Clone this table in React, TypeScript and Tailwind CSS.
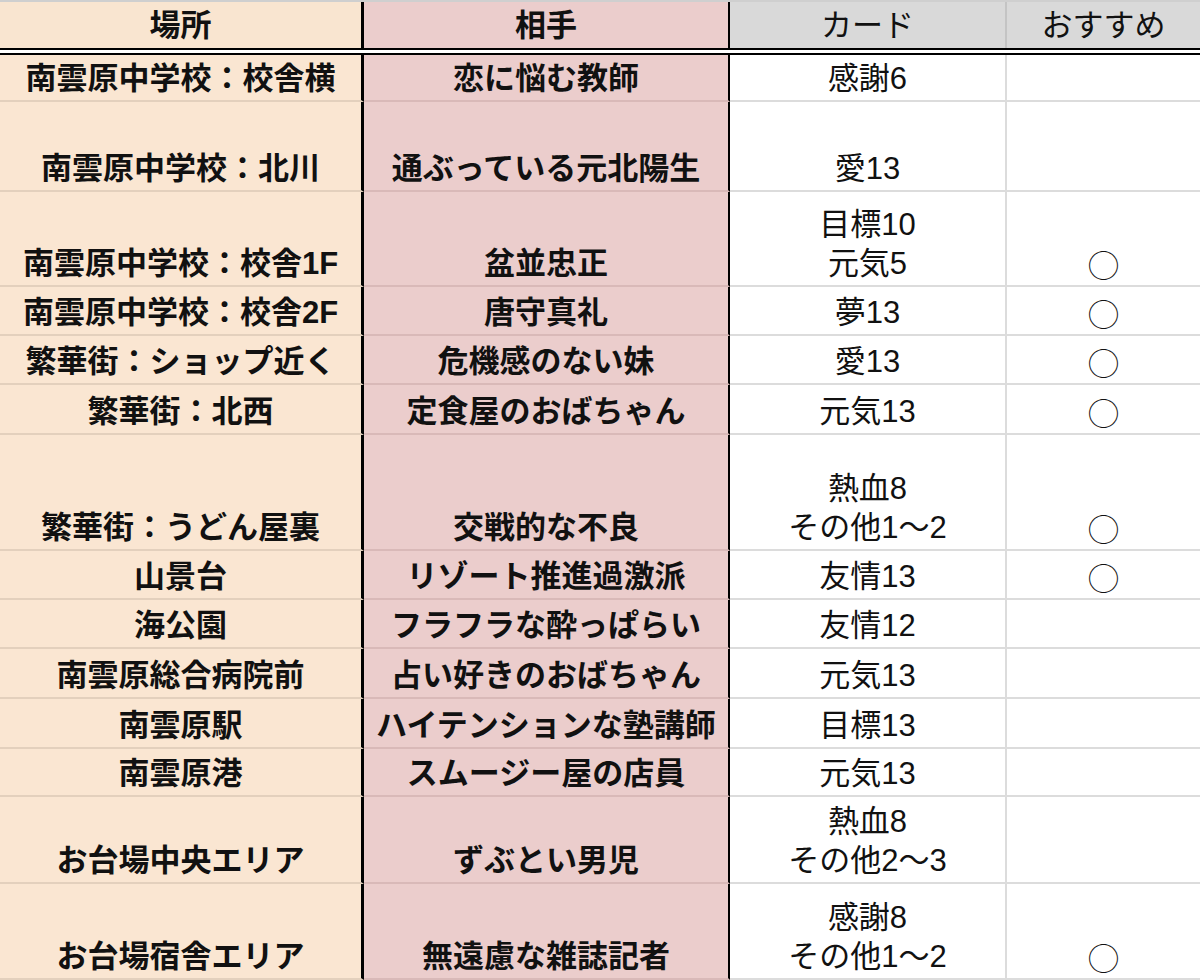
type Row = {
  place: string;
  who: string;
  card: string[];
  rec: boolean;
  h: number;
};

const rows: Row[] = [
  { place: "南雲原中学校：校舎横", who: "恋に悩む教師", card: ["感謝6"], rec: false, h: 47 },
  { place: "南雲原中学校：北川", who: "通ぶっている元北陽生", card: ["愛13"], rec: false, h: 90 },
  { place: "南雲原中学校：校舎1F", who: "盆並忠正", card: ["目標10", "元気5"], rec: true, h: 95 },
  { place: "南雲原中学校：校舎2F", who: "唐守真礼", card: ["夢13"], rec: true, h: 49 },
  { place: "繁華街：ショップ近く", who: "危機感のない妹", card: ["愛13"], rec: true, h: 49 },
  { place: "繁華街：北西", who: "定食屋のおばちゃん", card: ["元気13"], rec: true, h: 50 },
  { place: "繁華街：うどん屋裏", who: "交戦的な不良", card: ["熱血8", "その他1〜2"], rec: true, h: 116 },
  { place: "山景台", who: "リゾート推進過激派", card: ["友情13"], rec: true, h: 49 },
  { place: "海公園", who: "フラフラな酔っぱらい", card: ["友情12"], rec: false, h: 49 },
  { place: "南雲原総合病院前", who: "占い好きのおばちゃん", card: ["元気13"], rec: false, h: 50 },
  { place: "南雲原駅", who: "ハイテンションな塾講師", card: ["目標13"], rec: false, h: 50 },
  { place: "南雲原港", who: "スムージー屋の店員", card: ["元気13"], rec: false, h: 48 },
  { place: "お台場中央エリア", who: "ずぶとい男児", card: ["熱血8", "その他2〜3"], rec: false, h: 87 },
  { place: "お台場宿舎エリア", who: "無遠慮な雑誌記者", card: ["感謝8", "その他1〜2"], rec: true, h: 96 },
];

const cols = "grid grid-cols-[364px_366px_277px_193px]";

const App = () => {
  return (
    <div className="w-[1200px] h-[980px] overflow-hidden bg-white text-[#111] font-['Liberation_Sans','Noto_Sans_CJK_JP',sans-serif] text-[31px] leading-[39px]">
      {/* header */}
      <div className={`${cols} h-[48px] border-t-2 border-[#cfcfcf]`}>
        <div className="bg-[#f9e5d0] border-r-[3px] border-black flex items-center justify-center font-bold">
          場所
        </div>
        <div className="bg-[#ebcdcc] border-r-2 border-black flex items-center justify-center font-bold">
          相手
        </div>
        <div className="bg-[#d9d9d9] border-r-2 border-[#c4c4c4] flex items-center justify-center">
          カード
        </div>
        <div className="bg-[#d9d9d9] flex items-center justify-center">
          おすすめ
        </div>
      </div>
      <div className="h-[7px] border-y-2 border-black bg-white" />

      {rows.map((r, i) => (
        <div key={i} className={cols} style={{ height: r.h }}>
          <div className="bg-[#fae6d2] border-r-[3px] border-r-black border-b-2 border-b-[#e3d0bd] flex flex-col justify-end items-center pb-[2px] font-bold">
            {r.place}
          </div>
          <div className="bg-[#ebcdcc] border-r-2 border-r-black border-b-2 border-b-[#d9b9b8] flex flex-col justify-end items-center pb-[2px] font-bold">
            {r.who}
          </div>
          <div className="border-r-2 border-r-[#dcdcdc] border-b-2 border-b-[#dcdcdc] flex flex-col justify-end items-center pb-[2px]">
            {r.card.map((c) => (
              <span key={c}>{c}</span>
            ))}
          </div>
          <div className="border-b-2 border-b-[#dcdcdc] flex flex-col justify-end items-center pb-[2px] font-['Noto_Sans_CJK_JP',sans-serif]">
            {r.rec ? "◯" : ""}
          </div>
        </div>
      ))}
    </div>
  );
};

export default App;
